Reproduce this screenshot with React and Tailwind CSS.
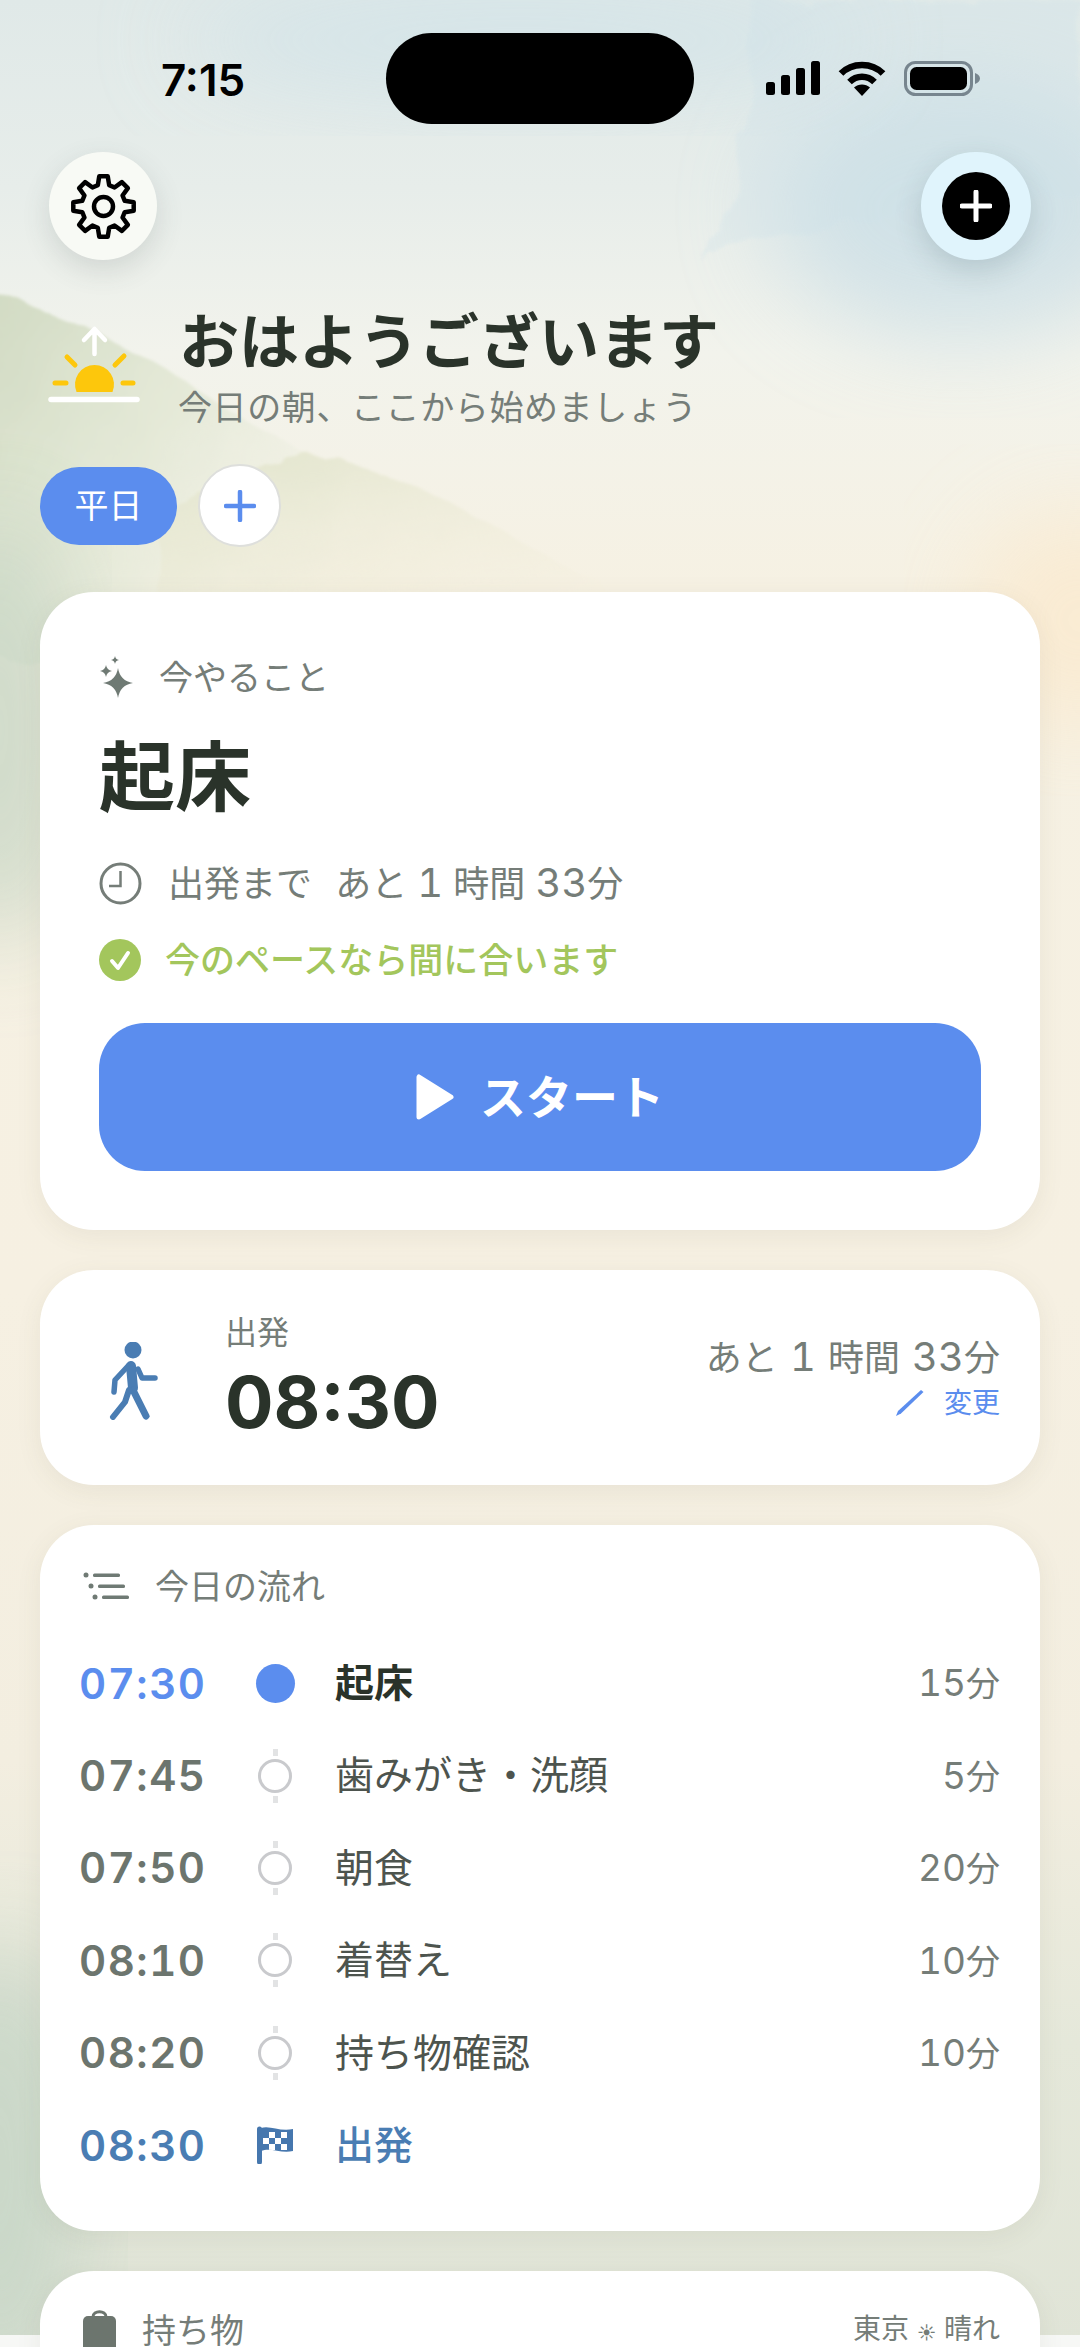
const flow = [
  { time: "07:30", name: "起床", mins: "15", state: "now" },
  { time: "07:45", name: "歯みがき・洗顔", mins: "5" },
  { time: "07:50", name: "朝食", mins: "20" },
  { time: "08:10", name: "着替え", mins: "10" },
  { time: "08:20", name: "持ち物確認", mins: "10" },
  { time: "08:30", name: "出発", state: "end" },
];

const gearPath = () => {
  const pts = [];
  for (let i = 0; i < 8; i++) {
    const a = (i * 45 - 90) * (Math.PI / 180);
    const at = (r, d) => {
      const t = a + d * (Math.PI / 180);
      return `${(32.5 + r * Math.cos(t)).toFixed(2)} ${(32.5 + r * Math.sin(t)).toFixed(2)}`;
    };
    pts.push(at(22, -15), at(30.5, -8), at(30.5, 8), at(22, 15));
  }
  return `M${pts.join("L")}Z`;
};

const star = (x, y, r) => {
  const k = r * 0.14;
  return `M${x} ${y - r}Q${x + k} ${y - k} ${x + r} ${y}Q${x + k} ${y + k} ${x} ${y + r}Q${x - k} ${y + k} ${x - r} ${y}Q${x - k} ${y - k} ${x} ${y - r}Z`;
};

const Background = () => (
  <svg className="absolute inset-0" width="1080" height="2347" viewBox="0 0 1080 2347">
    <defs>
      <linearGradient id="base" x1="0" y1="0" x2="0" y2="1">
        <stop offset="0" stopColor="#e0e9e8" />
        <stop offset="0.08" stopColor="#e7edea" />
        <stop offset="0.15" stopColor="#f2f3ec" />
        <stop offset="0.25" stopColor="#f6f1e3" />
        <stop offset="0.55" stopColor="#f6f0e2" />
        <stop offset="0.75" stopColor="#f3eee0" />
        <stop offset="0.87" stopColor="#e5e8da" />
        <stop offset="1" stopColor="#e0e4d7" />
      </linearGradient>
      <filter id="soft" x="-30%" y="-30%" width="160%" height="160%">
        <feGaussianBlur stdDeviation="46" />
      </filter>
      <filter id="wash" x="-20%" y="-20%" width="140%" height="140%">
        <feTurbulence type="fractalNoise" baseFrequency="0.018" numOctaves="4" seed="7" />
        <feDisplacementMap in="SourceGraphic" scale="24" />
        <feGaussianBlur stdDeviation="1.4" />
      </filter>
      <linearGradient id="hillLeft" x1="0" y1="0" x2="1" y2="0.5">
        <stop offset="0" stopColor="#d0dac2" />
        <stop offset="0.5" stopColor="#e6ead9" />
        <stop offset="1" stopColor="#f2f2e6" stopOpacity="0" />
      </linearGradient>
      <linearGradient id="hillMid" x1="0" y1="0" x2="0.6" y2="1">
        <stop offset="0" stopColor="#e2e5cd" />
        <stop offset="1" stopColor="#f3eedb" stopOpacity="0.1" />
      </linearGradient>
    </defs>
    <rect width="1080" height="2347" fill="url(#base)" />
    <ellipse cx="960" cy="210" rx="190" ry="130" fill="#c2dae5" opacity="0.62" filter="url(#soft)" />
    <ellipse cx="520" cy="40" rx="340" ry="60" fill="#d2e3e8" opacity="0.8" filter="url(#soft)" />
    <path d="M700 260C800 210 960 225 1080 190V0H760C740 90 760 170 700 260Z" fill="#cfe2e9" opacity="0.3" filter="url(#wash)" />
    <path d="M-20 290C60 310 140 350 230 410C300 450 340 470 420 560L420 660H-20Z" fill="url(#hillLeft)" filter="url(#wash)" />
    <path d="M160 520C240 470 290 440 350 462C420 480 500 530 610 590L610 640H160Z" fill="url(#hillMid)" filter="url(#wash)" />
    <ellipse cx="1080" cy="620" rx="110" ry="110" fill="#fbe9cd" opacity="0.75" filter="url(#soft)" />
    <ellipse cx="0" cy="730" rx="70" ry="220" fill="#c9d7c6" opacity="0.9" filter="url(#soft)" />
    <ellipse cx="0" cy="2170" rx="80" ry="230" fill="#c6d5c6" opacity="0.9" filter="url(#soft)" />
    <rect y="2335" width="1080" height="12" fill="#f7f8f6" />
  </svg>
);

const StatusIcons = () => (
  <div className="flex items-start pt-[28px] pl-[72px]">
    <svg width="54" height="34" viewBox="0 0 54 34" fill="#000">
      <rect x="0" y="21" width="9" height="13" rx="2.5" />
      <rect x="15" y="14" width="9" height="20" rx="2.5" />
      <rect x="30" y="7" width="9" height="27" rx="2.5" />
      <rect x="45" y="0" width="9" height="34" rx="2.5" />
    </svg>
    <svg className="ml-[18px]" width="48" height="35" viewBox="0 0 48 35" fill="none" stroke="#000" strokeWidth="6.5">
      <path d="M3 12.5C14 1 34 1 45 12.5" />
      <path d="M11.5 21C18.5 14 29.5 14 36.5 21" />
      <path d="M24 35L16 26.5C20.5 22.5 27.5 22.5 32 26.5Z" fill="#000" stroke="none" />
    </svg>
    <svg className="ml-[18px]" width="76" height="35" viewBox="0 0 76 35">
      <rect x="1.5" y="1.5" width="66" height="32" rx="10" fill="none" stroke="#77858e" strokeWidth="3" />
      <rect x="6" y="6" width="57" height="23" rx="6.5" fill="#000" />
      <path d="M71 12C74 13 76 15 76 17.5C76 20 74 22 71 23Z" fill="#77858e" />
    </svg>
  </div>
);

const Plus = ({ size, stroke, color }) => (
  <svg width={size} height={size} viewBox="0 0 32 32" fill="none" stroke={color} strokeWidth={stroke} strokeLinecap="round">
    <path d="M16 2V30M2 16H30" />
  </svg>
);

const SunIcon = () => (
  <svg className="shrink-0" width="92" height="80" viewBox="0 0 92 80" fill="none" strokeLinecap="round">
    <path d="M46.5 5V29M36 15L46.5 4L57 15" stroke="#fff" strokeWidth="4.5" strokeLinejoin="round" />
    <g stroke="#fdc70c" strokeWidth="5">
      <path d="M19 32L27 40M76 31L67 40M7 58H18M75 58H85" />
    </g>
    <path d="M28.5 67A19.5 19.5 0 1 1 64.5 67Z" fill="#fdc70c" />
    <path d="M3 74.5H89" stroke="#fff" strokeWidth="5.5" />
  </svg>
);

const Walker = () => (
  <svg width="50" height="78" viewBox="0 0 50 78" fill="none" stroke="#4a7db3" strokeLinecap="round" strokeLinejoin="round">
    <circle cx="24" cy="8" r="8.5" fill="#4a7db3" stroke="none" />
    <path d="M22 24L24 46" strokeWidth="10" />
    <path d="M19 24L6 38L5 50" strokeWidth="5.5" />
    <path d="M29 27L33 36H46" strokeWidth="5.5" />
    <path d="M24 48L37 74" strokeWidth="7" />
    <path d="M20 48L16 60L4 75" strokeWidth="6" />
  </svg>
);

const Flag = () => (
  <svg width="36" height="38" viewBox="0 0 36 38">
    <defs>
      <clipPath id="flagClip">
        <path d="M4 2C13 -1 23 6 36 3V25C24 28 14 21 4 25Z" />
      </clipPath>
    </defs>
    <path d="M2.5 3V36" stroke="#4677ae" strokeWidth="5" strokeLinecap="round" />
    <path d="M4 2C13 -1 23 6 36 3V25C24 28 14 21 4 25Z" fill="#4677ae" />
    <g clipPath="url(#flagClip)" fill="#fff">
      <rect x="12" y="6" width="6" height="6" />
      <rect x="24" y="6" width="6" height="6" />
      <rect x="18" y="12" width="6" height="6" />
      <rect x="6" y="12" width="6" height="6" />
      <rect x="12" y="18" width="6" height="6" />
      <rect x="24" y="18" width="6" height="6" />
    </g>
  </svg>
);

const FlowMark = ({ state }) => {
  if (state === "now") return <span className="w-[39px] h-[39px] rounded-full bg-[#5b8dee]" />;
  if (state === "end") return <Flag />;
  return (
    <span className="flex flex-col items-center gap-[3px]">
      <span className="w-[5px] h-[7px] bg-[#e2e3e4]" />
      <span className="w-[34px] h-[34px] rounded-full border-[3px] border-[#c9cacd]" />
      <span className="w-[5px] h-[7px] bg-[#e2e3e4]" />
    </span>
  );
};

const card = "bg-white rounded-[54px] shadow-[0_6px_26px_rgba(90,90,70,0.08)]";
const digits = "text-[40px] tabular-nums";

export default function App() {
  return (
    <div className="relative w-[1080px] h-[2347px] overflow-hidden font-['Inter','Noto_Sans_CJK_JP',sans-serif] text-[#2a332a]">
      <Background />
      <div className="relative">
        {/* status bar */}
        <div className="grid grid-cols-[386px_308px_1fr] pt-[33px]">
          <div className="pl-[161px] pt-[22px] text-[44px] leading-[50px] font-semibold text-black">7:15</div>
          <div className="h-[91px] rounded-full bg-black" />
          <StatusIcons />
        </div>

        <div className="flex justify-between px-[49px] mt-[28px]">
          <button className="w-[108px] h-[108px] rounded-full bg-[#f8faf5] shadow-[0_10px_28px_rgba(70,80,80,0.16)] flex items-center justify-center">
            <svg width="65" height="65" viewBox="0 0 65 65" fill="none" stroke="#000" strokeWidth="4.5" strokeLinejoin="round">
              <path d={gearPath()} />
              <circle cx="32.5" cy="32.5" r="9.5" />
            </svg>
          </button>
          <button className="w-[110px] h-[108px] rounded-full bg-[#e0f4fc] shadow-[0_10px_28px_rgba(60,90,100,0.2)] flex items-center justify-center">
            <span className="w-[68px] h-[68px] rounded-full bg-black flex items-center justify-center">
              <Plus size={32} stroke={5} color="#fff" />
            </span>
          </button>
        </div>

        {/* greeting */}
        <div className="flex items-end pl-[48px] mt-[46px]">
          <div className="pb-[25px]">
            <SunIcon />
          </div>
          <div className="ml-[38px]">
            <h1 className="text-[60px] leading-[72px] font-bold ml-[1px]">おはようございます</h1>
            <p className="mt-[8px] text-[34px] leading-[44px] text-[#757d78] tracking-[0.6px]">今日の朝、ここから始めましょう</p>
          </div>
        </div>

        <div className="flex items-center gap-[21px] px-[40px] mt-[34px]">
          <span className="w-[137px] h-[78px] rounded-full bg-[#5b8dee] text-white text-[34px] flex items-center justify-center">平日</span>
          <button className="w-[83px] h-[83px] rounded-full bg-white border-2 border-[#dedfdc] flex items-center justify-center">
            <Plus size={32} stroke={4.5} color="#5b8dee" />
          </button>
        </div>

        <div className="px-[40px] mt-[45px] flex flex-col gap-[40px]">
          {/* now card */}
          <section className={`${card} h-[638px] pt-[60px] px-[59px]`}>
            <div className="flex items-center gap-[24px] h-[50px]">
              <svg width="36" height="42" viewBox="0 0 36 42" fill="#6f7a74">
                <path d={star(19, 27, 15)} />
                <path d={star(7, 15, 6)} />
                <path d={star(16, 4, 4)} />
              </svg>
              <span className="text-[34px] text-[#757d78]">今やること</span>
            </div>
            <div className="mt-[30px] text-[76px] leading-[90px] font-bold">起床</div>
            <div className="mt-[37px] flex items-center gap-[26px] h-[48px]">
              <svg width="43" height="43" viewBox="0 0 43 43" fill="none" stroke="#757d78" strokeWidth="3">
                <circle cx="21.5" cy="21.5" r="19.5" />
                <path d="M21.5 9V24H10" strokeWidth="2.5" />
              </svg>
              <span className="text-[36px] leading-[48px] text-[#757d78]">
                出発まで<span className="ml-[13px]"> あと </span><span className={digits}>1</span> 時間 <span className={digits}>33</span>分
              </span>
            </div>
            <div className="mt-[31px] flex items-center gap-[24px] h-[44px]">
              <svg width="42" height="42" viewBox="0 0 42 42">
                <circle cx="21" cy="21" r="21" fill="#a3c65c" />
                <path d="M13 22L19 29L29 14" fill="none" stroke="#fff" strokeWidth="4" strokeLinecap="round" strokeLinejoin="round" />
              </svg>
              <span className="text-[35px] font-medium text-[#a3c65c]">今のペースなら間に合います</span>
            </div>
            <button className="mt-[41px] w-full h-[148px] rounded-[46px] bg-[#5b8dee] text-white flex items-center justify-center gap-[26px]">
              <svg width="38" height="46" viewBox="0 0 38 46" fill="#fff" stroke="#fff" strokeWidth="5" strokeLinejoin="round">
                <path d="M3 3V43L35 23Z" />
              </svg>
              <span className="text-[46px] font-bold">スタート</span>
            </button>
          </section>

          {/* departure */}
          <section className={`${card} h-[215px] pl-[69px] pr-[40px] flex items-center`}>
            <div className="pt-[6px]">
              <Walker />
            </div>
            <div className="ml-[66px] -mt-[1px]">
              <div className="text-[32px] leading-[40px] text-[#757d78]">出発</div>
              <div className="mt-[9px] text-[72px] leading-[80px] font-bold">08:30</div>
            </div>
            <div className="ml-auto flex flex-col items-end -mt-[2px]">
              <div className="text-[36px] leading-[50px] text-[#757d78] [word-spacing:2px]">
                あと <span className={digits}>1</span> 時間 <span className={digits}>33</span>分
              </div>
              <div className="flex items-center gap-[20px] mt-[2px]">
                <svg width="28" height="26" viewBox="0 0 28 26" fill="#5b8dee">
                  <path d="M25 0L27.5 2L5 23.5L0 26L2 21Z" />
                </svg>
                <span className="text-[28px] leading-[36px] text-[#5b8dee]">変更</span>
              </div>
            </div>
          </section>

          {/* flow */}
          <section className={`${card} h-[706px] pt-[38px] pl-[39px] pr-[40px]`}>
            <div className="flex items-center gap-[26px] h-[46px] pl-[4px]">
              <svg width="46" height="30" viewBox="0 0 46 30" fill="#6f7a74">
                <circle cx="3" cy="4" r="2.5" />
                <circle cx="8" cy="15" r="2.5" />
                <circle cx="12" cy="26" r="2.5" />
                <rect x="10" y="2.5" width="27" height="3.5" rx="1.5" />
                <rect x="15" y="13.5" width="27" height="3.5" rx="1.5" />
                <rect x="19" y="24.5" width="27" height="3.5" rx="1.5" />
              </svg>
              <span className="text-[34px] text-[#757d78]">今日の流れ</span>
            </div>
            <div className="mt-[28px]">
              {flow.map((row) => (
                <div key={row.time} className="grid grid-cols-[157px_78px_1fr_auto] items-center h-[92.4px]">
                  <span
                    className={`text-[42px] font-semibold tabular-nums tracking-[1.5px] ${
                      row.state === "now"
                        ? "text-[#5b8dee]"
                        : row.state === "end"
                        ? "text-[#4a7db3]"
                        : "text-[#6c756e]"
                    }`}
                  >
                    {row.time}
                  </span>
                  <span className="flex justify-center">
                    <FlowMark state={row.state} />
                  </span>
                  <span
                    className={`pl-[21px] text-[39px] ${
                      row.state === "now"
                        ? "font-semibold"
                        : row.state === "end"
                        ? "font-medium text-[#4a7db3]"
                        : "text-[#4d544e]"
                    }`}
                  >
                    {row.name}
                  </span>
                  {row.mins && (
                    <span className="text-[34px] text-[#757d78]">
                      <span className="text-[37px] tabular-nums">{row.mins}</span>分
                    </span>
                  )}
                </div>
              ))}
            </div>
          </section>

          {/* belongings */}
          <section className={`${card} h-[140px] pt-[38px] pl-[43px] pr-[40px]`}>
            <div className="flex items-center h-[44px]">
              <svg width="33" height="44" viewBox="0 0 33 44" fill="#6c756e">
                <path d="M10 8C10 1 23 1 23 8" fill="none" stroke="#6c756e" strokeWidth="3" />
                <rect x="0" y="7" width="33" height="37" rx="5" />
              </svg>
              <span className="ml-[26px] text-[34px] leading-[30px] text-[#757d78]">持ち物</span>
              <span className="ml-auto text-[28px] leading-[30px] text-[#757d78]">
                東京 <span className="text-[18px]">☀</span> 晴れ
              </span>
            </div>
          </section>
        </div>
      </div>
    </div>
  );
}
